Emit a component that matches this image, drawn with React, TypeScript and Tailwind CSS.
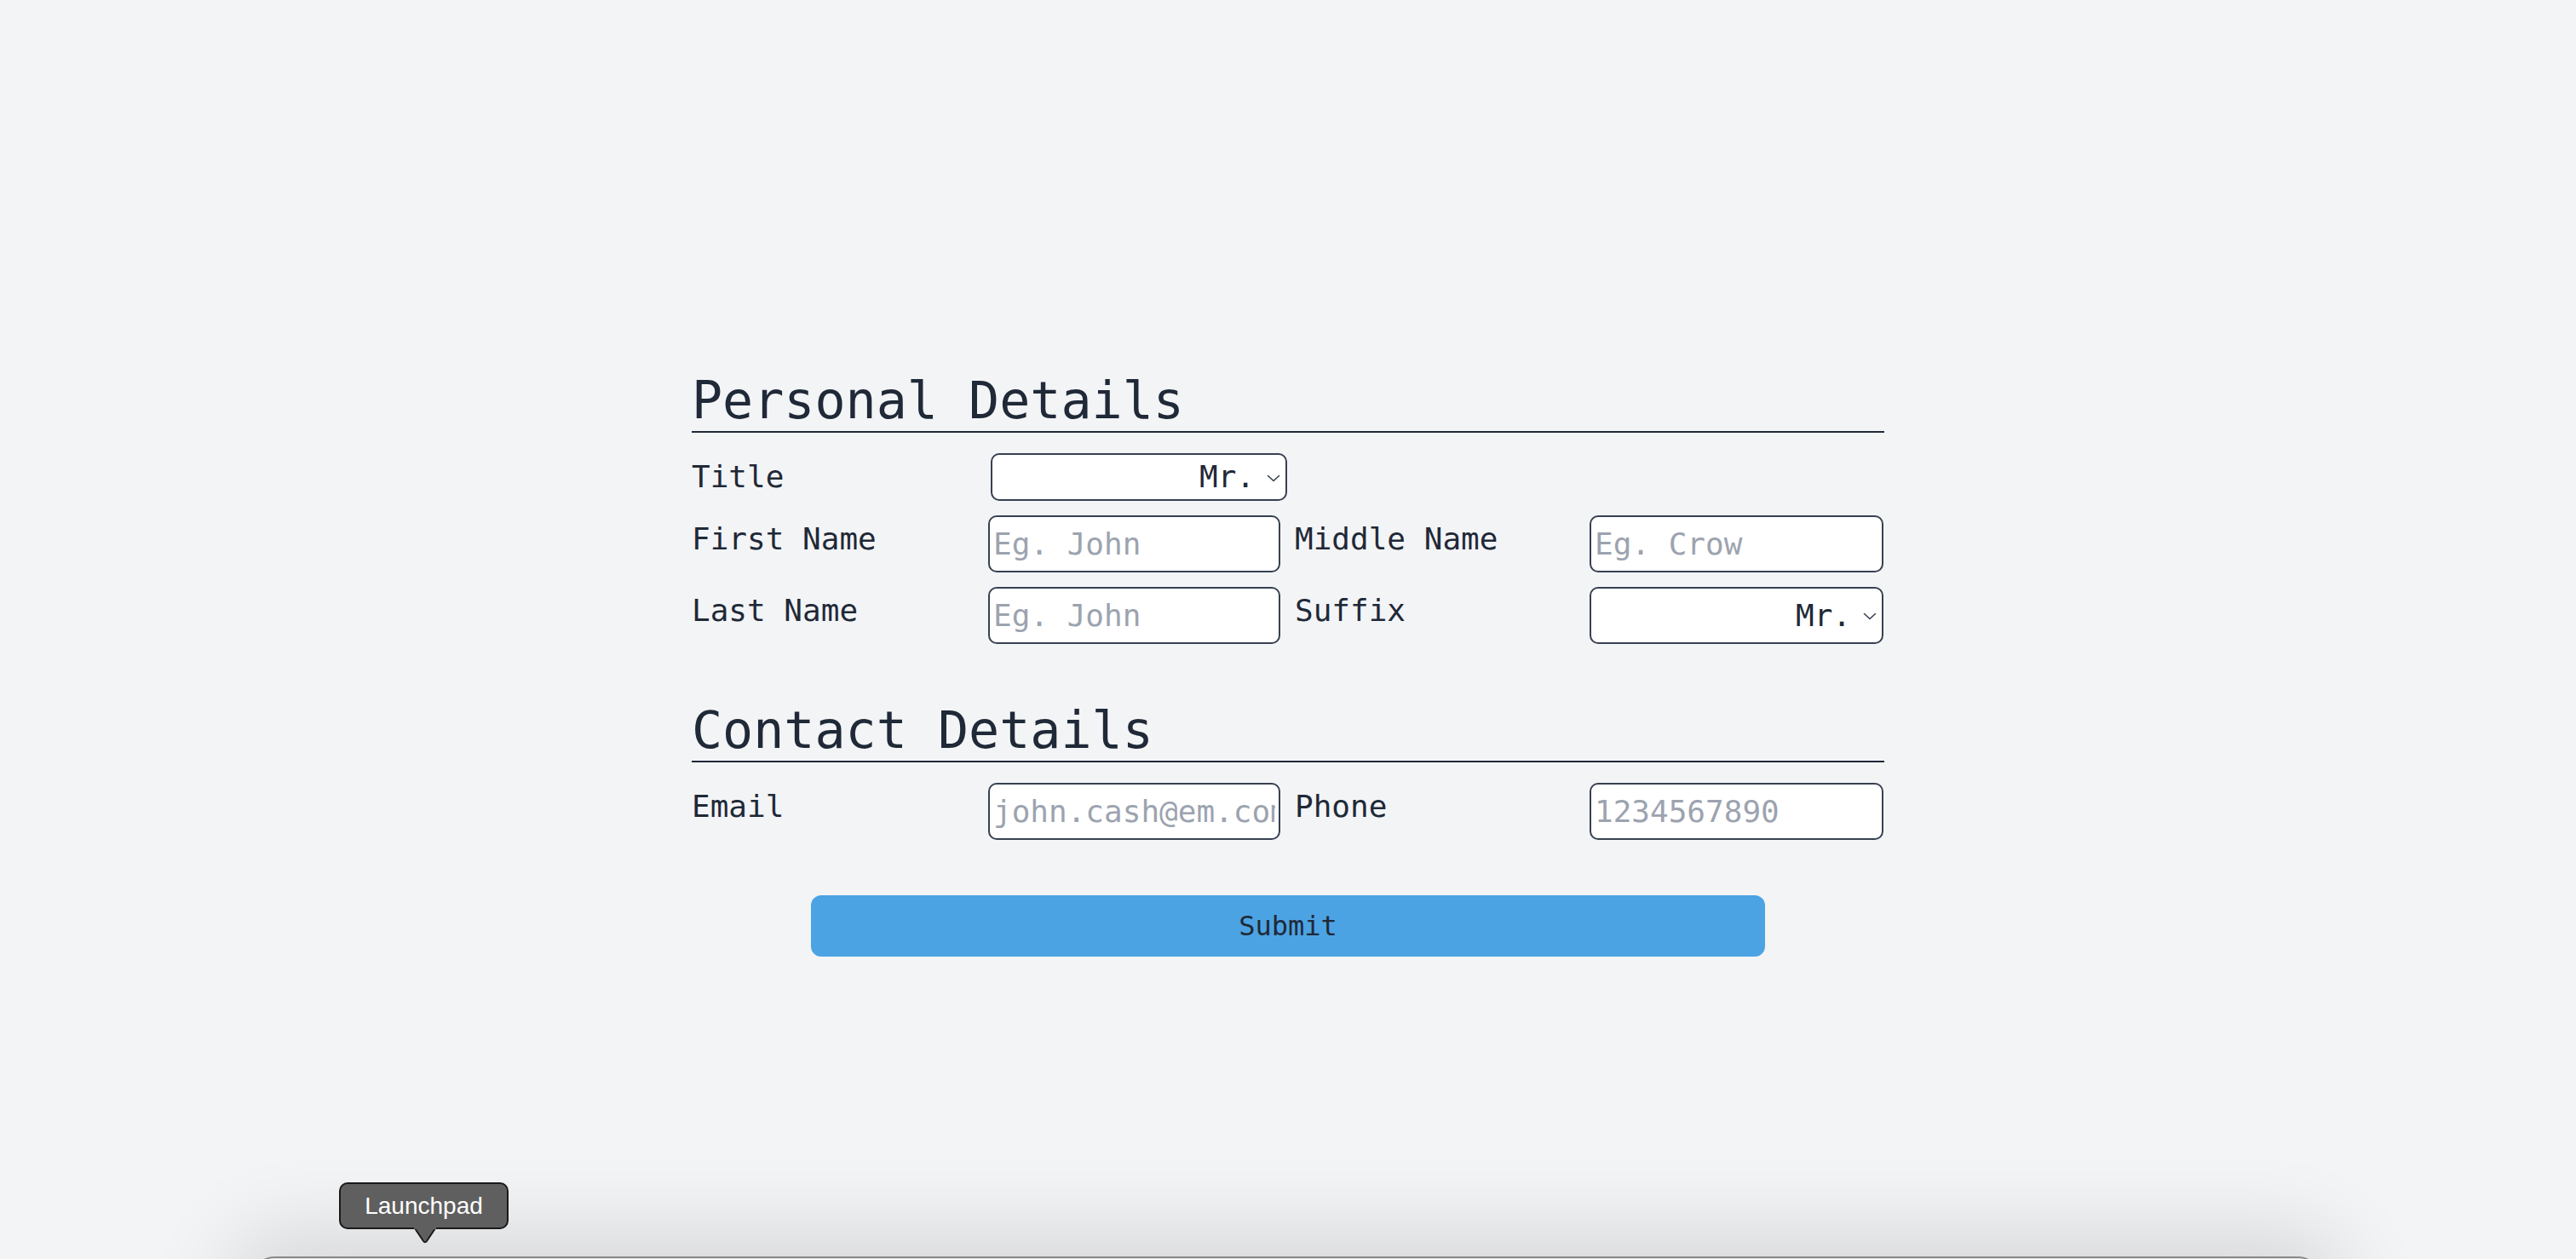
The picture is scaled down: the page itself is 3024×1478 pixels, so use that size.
import React from "react";

const labelCls = "text-[36px] leading-[56px] text-[#1f2937] shrink-0";
const inputCls =
    "h-[67px] rounded-[10px] border-2 border-[#374151] bg-white pl-[4px] pr-[4px] text-[36px] text-[#1f2937] placeholder:text-[#9ca3af] outline-none";

function Chevron() {
    return (
        <svg width="16" height="9" viewBox="0 0 16 9" fill="none" className="shrink-0">
            <path d="M1.5 1.5L8 7.5L14.5 1.5" stroke="#374151" strokeWidth={1.6} strokeLinecap="round" strokeLinejoin="round" />
        </svg>
    );
}

function FakeSelect({ className }: { className: string }) {
    return (
        <div
            role="combobox"
            className={`flex items-center justify-end rounded-[10px] border-2 border-[#374151] bg-white pr-[6px] ${className}`}
        >
            <span className="text-[36px] leading-none text-[#1f2937]">Mr.</span>
            <span className="ml-[14px] mt-[2px]">
                <Chevron />
            </span>
        </div>
    );
}

function SectionHeading({ children }: { children: React.ReactNode }) {
    return (
        <h2 className="border-b-2 border-[#1f2937] text-[60px] leading-[72px] text-[#1f2937]">
            {children}
        </h2>
    );
}

export default function App() {
    return (
        <div
            className="relative h-screen overflow-hidden bg-[#f3f4f6] pt-[434px]"
            style={{ fontFamily: '"DejaVu Sans Mono", monospace' }}
        >
            <form className="mx-auto w-[1400px]" onSubmit={(e) => e.preventDefault()}>
                {/* Personal details */}
                <SectionHeading>Personal Details</SectionHeading>
                <div className="mt-6 flex flex-col gap-[17px]">
                    <div className="flex items-start">
                        <label className={`${labelCls} w-[351px]`}>Title</label>
                        <FakeSelect className="h-[56px] w-[348px]" />
                    </div>
                    <div className="flex items-start">
                        <label className={`${labelCls} w-[348px]`}>First Name</label>
                        <input className={`${inputCls} w-[343px]`} placeholder="Eg. John" />
                        <label className={`${labelCls} ml-[17px] w-[346px]`}>Middle Name</label>
                        <input className={`${inputCls} w-[345px]`} placeholder="Eg. Crow" />
                    </div>
                    <div className="flex items-start">
                        <label className={`${labelCls} w-[348px]`}>Last Name</label>
                        <input className={`${inputCls} w-[343px]`} placeholder="Eg. John" />
                        <label className={`${labelCls} ml-[17px] w-[346px]`}>Suffix</label>
                        <FakeSelect className="h-[67px] w-[345px]" />
                    </div>
                </div>

                {/* Contact details */}
                <div className="mt-[65px]">
                    <SectionHeading>Contact Details</SectionHeading>
                </div>
                <div className="mt-6 flex items-start">
                    <label className={`${labelCls} w-[348px]`}>Email</label>
                    <input className={`${inputCls} w-[343px]`} placeholder="john.cash@em.com" />
                    <label className={`${labelCls} ml-[17px] w-[346px]`}>Phone</label>
                    <input className={`${inputCls} w-[345px]`} placeholder="1234567890" />
                </div>

                <button
                    type="submit"
                    className="mx-auto mt-[65px] block h-[72px] w-4/5 rounded-[12px] bg-[#4ca3e3] text-[32px] leading-[48px] text-[#1f2937]"
                >
                    Submit
                </button>
            </form>

            {/* macOS dock edge + shadow */}
            <div className="absolute left-[296px] right-[300px] top-[1475px] h-[60px] rounded-t-[26px] border-t-2 border-[#8a8a8a] bg-[#e2e2e4] shadow-[0_0_100px_24px_rgba(0,0,0,0.13)]" />

            {/* Launchpad tooltip */}
            <div
                className="absolute left-[398px] top-[1388px] flex h-[55px] w-[199px] items-center justify-center rounded-[10px] border-2 border-[#1a1a1a] bg-[#5f5f5f] text-[28px] text-white"
                style={{ fontFamily: '"Liberation Sans", Arial, sans-serif' }}
            >
                Launchpad
                <svg className="absolute left-[86px] top-[51px]" width="26" height="19" viewBox="0 0 26 19">
                    <path d="M1 1 L11 16 Q13 18.5 15 16 L25 1" fill="#5f5f5f" stroke="#1a1a1a" strokeWidth={2} />
                    <rect x="0" y="0" width="26" height="2.2" fill="#5f5f5f" />
                </svg>
            </div>
        </div>
    );
}
